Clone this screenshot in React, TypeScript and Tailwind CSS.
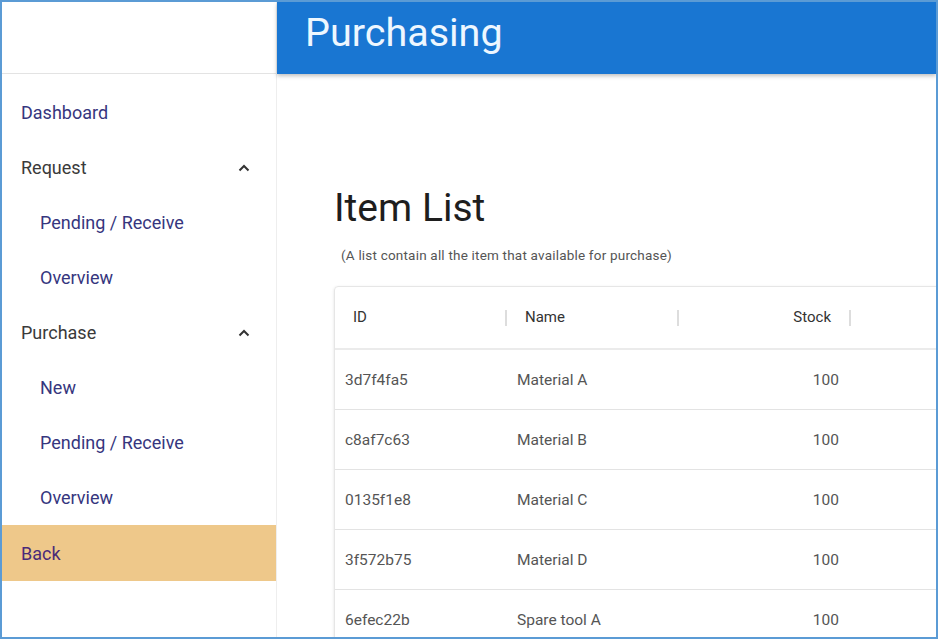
import React from "react";

const rows = [
  { id: "3d7f4fa5", name: "Material A", stock: 100 },
  { id: "c8af7c63", name: "Material B", stock: 100 },
  { id: "0135f1e8", name: "Material C", stock: 100 },
  { id: "3f572b75", name: "Material D", stock: 100 },
  { id: "6efec22b", name: "Spare tool A", stock: 100 },
];

function Chevron() {
  return (
    <svg width="12" height="8" viewBox="0 0 12 8" className="text-[#333]">
      <path d="M1.5 6.5 L6 2 L10.5 6.5" fill="none" stroke="currentColor" strokeWidth="2" />
    </svg>
  );
}

function NavLink({ label, nested }: { label: string; nested?: boolean }) {
  return (
    <div
      className={`flex h-[55px] items-center text-[18px] text-[#36367e] ${
        nested ? "pl-[38px]" : "pl-[19px]"
      }`}
    >
      {label}
    </div>
  );
}

function NavGroup({ label }: { label: string }) {
  return (
    <div className="flex h-[55px] items-center justify-between pl-[19px] pr-[26px] text-[18px] text-[#3a3a3a]">
      <span>{label}</span>
      <Chevron />
    </div>
  );
}

export default function App() {
  return (
    <div
      className="h-[639px] w-[938px] overflow-hidden border-2 border-[#5b9bd5] bg-white"
      style={{ fontFamily: "Roboto, 'Liberation Sans', sans-serif" }}
    >
      <div className="flex h-full">
        <aside className="w-[275px] shrink-0 border-r border-[#eeeeee]">
          <div className="h-[72px] border-b border-[#e3e3e3]" />
          <nav className="pt-[11px]">
            <NavLink label="Dashboard" />
            <NavGroup label="Request" />
            <NavLink label="Pending / Receive" nested />
            <NavLink label="Overview" nested />
            <NavGroup label="Purchase" />
            <NavLink label="New" nested />
            <NavLink label="Pending / Receive" nested />
            <NavLink label="Overview" nested />
            <div className="flex h-[56px] items-center bg-[#eec88a] pl-[19px] text-[18px] text-[#4a2a78]">
              Back
            </div>
          </nav>
        </aside>

        <main className="min-w-0 flex-1">
          <header className="h-[72px] bg-[#1976d2] pl-[28px] pt-[6px] shadow-[0_2px_4px_rgba(0,0,0,0.25)]">
            <h1 className="text-[39.5px] leading-[50px] text-[#eef7ff]">Purchasing</h1>
          </header>

          <section className="pl-[57px] pt-[112px]">
            <h2 className="text-[39px] leading-[44px] text-[#1e1e1e]">Item List</h2>
            <p className="mt-[15px] pl-[7px] text-[13.5px] leading-[20px] tracking-[0.2px] text-[#555]">
              (A list contain all the item that available for purchase)
            </p>

            <div className="mt-[21px] w-[640px] rounded border border-[#e6e6e6] shadow-[0_1px_3px_rgba(0,0,0,0.12)]">
              <div className="grid h-[63px] grid-cols-[172px_172px_172px_1fr] items-center border-b-2 border-[#ebebeb] text-[15px] text-[#333]">
                <div className="flex items-center justify-between pl-[18px]">
                  <span>ID</span>
                  <span className="h-[16px] w-[2px] bg-[#dddddd]" />
                </div>
                <div className="flex items-center justify-between pl-[18px]">
                  <span>Name</span>
                  <span className="h-[16px] w-[2px] bg-[#dddddd]" />
                </div>
                <div className="flex items-center justify-end gap-[18px]">
                  <span>Stock</span>
                  <span className="h-[16px] w-[2px] bg-[#dddddd]" />
                </div>
                <div />
              </div>
              {rows.map((r) => (
                <div
                  key={r.id}
                  className="grid h-[60px] grid-cols-[172px_172px_172px_1fr] items-center border-b border-[#e3e3e3] pt-[2px] text-[15.5px] text-[#555]"
                >
                  <div className="pl-[10px]">{r.id}</div>
                  <div className="pl-[10px]">{r.name}</div>
                  <div className="pr-[12px] text-right">{r.stock}</div>
                  <div />
                </div>
              ))}
            </div>
          </section>
        </main>
      </div>
    </div>
  );
}
